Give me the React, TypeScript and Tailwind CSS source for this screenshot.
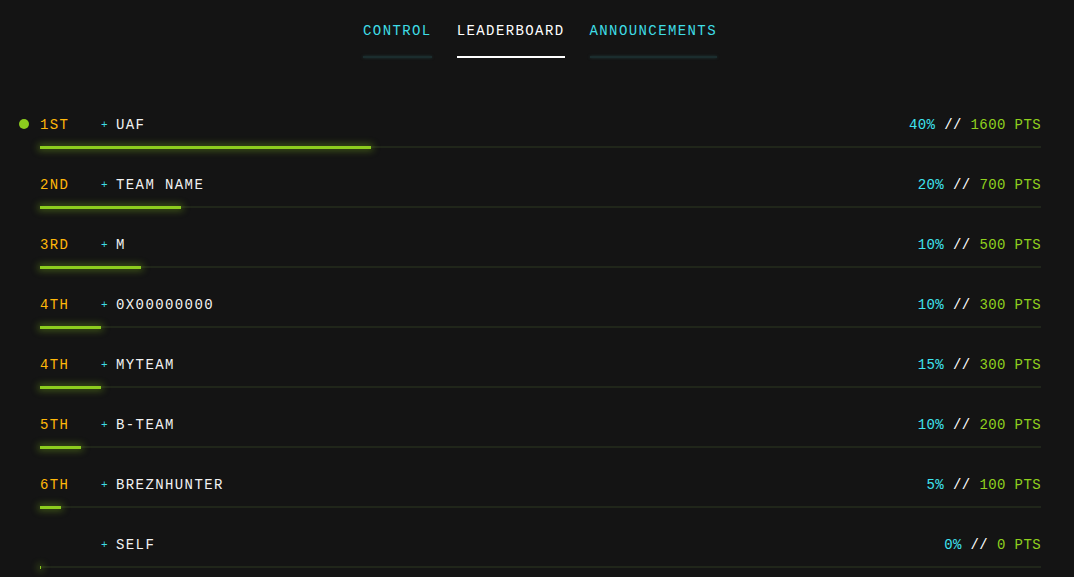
import React from 'react';

const rows = [
  { rank: '1ST', name: 'UAF', pct: '40%', pts: '1600', bar: 331, active: true },
  { rank: '2ND', name: 'TEAM NAME', pct: '20%', pts: '700', bar: 141 },
  { rank: '3RD', name: 'M', pct: '10%', pts: '500', bar: 101 },
  { rank: '4TH', name: '0X00000000', pct: '10%', pts: '300', bar: 61 },
  { rank: '4TH', name: 'MYTEAM', pct: '15%', pts: '300', bar: 61 },
  { rank: '5TH', name: 'B-TEAM', pct: '10%', pts: '200', bar: 41 },
  { rank: '6TH', name: 'BREZNHUNTER', pct: '5%', pts: '100', bar: 21 },
  { rank: '', name: 'SELF', pct: '0%', pts: '0', bar: 1 },
];

const tabs = [
  { label: 'CONTROL', active: false },
  { label: 'LEADERBOARD', active: true },
  { label: 'ANNOUNCEMENTS', active: false },
];

export default function App() {
  return (
    <div className="min-h-[577px] w-full overflow-hidden bg-[#141414] font-['Liberation_Mono',monospace] text-[14px]">
      <nav className="flex justify-center gap-[25px] pl-[6px] pt-[23px]">
        {tabs.map((t) => (
          <div key={t.label} className="flex flex-col">
            <span
              className={`h-[16px] leading-[16px] tracking-[1.4px] ${
                t.active ? 'text-white' : 'text-[#3fdde6]'
              }`}
            >
              {t.label}
            </span>
            <div
              className={`mt-[17px] h-[2px] ${
                t.active ? 'bg-white' : 'bg-[#1b2d2e] shadow-[0_0_3px_rgba(40,80,80,0.6)]'
              }`}
            />
          </div>
        ))}
      </nav>

      <div className="mt-[42px] pl-[40px] pr-[33px]">
        {rows.map((r, i) => (
          <div key={i} className="relative h-[60px] pt-[15px]">
            {r.active && (
              <span className="absolute left-[-21px] top-[19px] h-[10px] w-[10px] rounded-full bg-[#8ccc1e]" />
            )}
            <div className="flex h-[20px] items-center leading-[20px] tracking-[1.4px]">
              <span className="w-[61px] text-[#ffb70a]">{r.rank}</span>
              <span className="w-[15px] text-[11px] text-[#3fdde6]">+</span>
              <span className="flex-1 text-[#f2f2f2]">{r.name}</span>
              <span className="tracking-[0.4px]">
                <span className="text-[#3fe3ef]">{r.pct}</span>
                <span className="text-white"> // </span>
                <span className="text-[#8fd01e]">{r.pts} PTS</span>
              </span>
            </div>
            <div className="relative mt-[11px] h-[2px] bg-[#20261a]">
              <div
                className="absolute left-0 top-[-0.5px] h-[3px] bg-[#8ccc1e] shadow-[0_0_7px_2px_rgba(140,204,30,0.35)]"
                style={{ width: r.bar }}
              />
            </div>
          </div>
        ))}
      </div>
    </div>
  );
}
